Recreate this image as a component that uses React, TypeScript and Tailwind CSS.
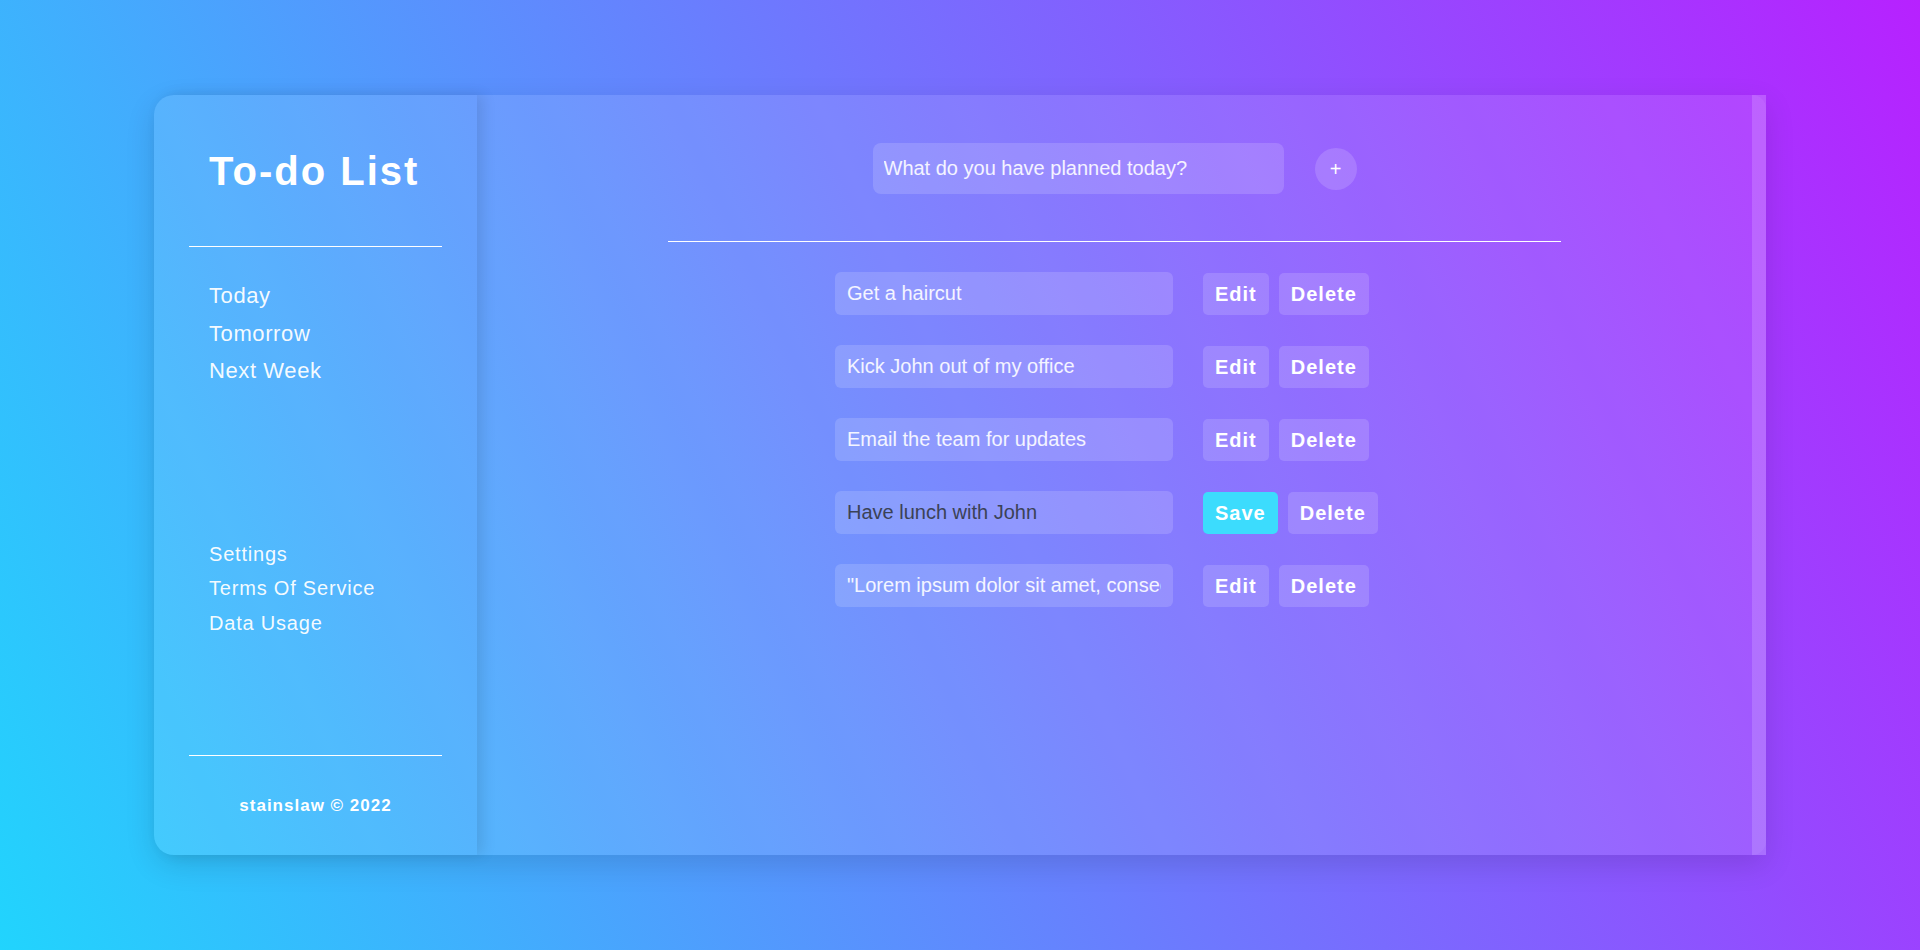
import React, { useState } from 'react'

type Todo = { id: number; text: string }

const initialTodos: Todo[] = [
  { id: 1, text: 'Get a haircut' },
  { id: 2, text: 'Kick John out of my office' },
  { id: 3, text: 'Email the team for updates' },
  { id: 4, text: 'Have lunch with John' },
  { id: 5, text: '"Lorem ipsum dolor sit amet, consectetur adipiscing elit, sed do eiusmod tempor"' },
]

const font = { fontFamily: '"Liberation Sans", Arial, sans-serif' }

export default function App() {
  const [todos, setTodos] = useState<Todo[]>(initialTodos)
  const [editingId, setEditingId] = useState<number | null>(4)
  const [draft, setDraft] = useState('')

  const addTodo = () => {
    if (!draft.trim()) return
    setTodos(prev => [...prev, { id: Date.now(), text: draft.trim() }])
    setDraft('')
  }

  const updateTodo = (id: number, text: string) => {
    setTodos(prev => prev.map(t => (t.id === id ? { ...t, text } : t)))
  }

  const deleteTodo = (id: number) => {
    setTodos(prev => prev.filter(t => t.id !== id))
  }

  return (
    <div
      className="h-[950px] w-full overflow-hidden bg-[linear-gradient(65deg,#21d4fd_0%,#b721ff_100%)] pt-[95px] pl-[154px]"
      style={font}
    >
      <div className="flex h-[760px] w-[1612px] rounded-l-[20px] shadow-[0_10px_30px_rgba(0,0,0,0.12)]">
        <Sidebar />

        <main className="flex flex-1 flex-col bg-white/10 pt-[48px]">
          <div className="flex items-center justify-center">
            <input
              className="h-[51px] w-[411px] rounded-[8px] bg-white/15 px-[11px] text-[20px] text-white outline-none placeholder:text-white/90"
              placeholder="What do you have planned today?"
              value={draft}
              onChange={e => setDraft(e.target.value)}
            />
            <button
              onClick={addTodo}
              className="ml-[31px] flex h-[42px] w-[42px] items-center justify-center rounded-full bg-white/15 text-[20px] text-white"
            >
              +
            </button>
          </div>

          <div className="mx-auto mt-[47px] h-px w-[893px] bg-white" />

          <ul className="mx-auto mt-[30px] flex w-[893px] flex-col gap-[30px] pl-[167px]">
            {todos.map(todo => {
              const editing = editingId === todo.id
              return (
                <li key={todo.id} className="flex items-center">
                  <input
                    readOnly={!editing}
                    value={todo.text}
                    onChange={e => updateTodo(todo.id, e.target.value)}
                    className={`h-[43px] w-[338px] rounded-[6px] bg-white/15 px-[12px] text-[20px] outline-none ${editing ? 'text-[#3b4256]' : 'text-white/90'}`}
                  />
                  {editing ? (
                    <button
                      onClick={() => setEditingId(null)}
                      className="ml-[30px] h-[42px] rounded-[5px] bg-[#3cdcfd] px-[12px] text-[20px] font-bold tracking-[1px] text-white"
                    >
                      Save
                    </button>
                  ) : (
                    <button
                      onClick={() => setEditingId(todo.id)}
                      className="ml-[30px] h-[42px] rounded-[5px] bg-white/15 px-[12px] text-[20px] font-bold tracking-[1px] text-white"
                    >
                      Edit
                    </button>
                  )}
                  <button
                    onClick={() => deleteTodo(todo.id)}
                    className="ml-[10px] h-[42px] rounded-[5px] bg-white/15 px-[12px] text-[20px] font-bold tracking-[1px] text-white"
                  >
                    Delete
                  </button>
                </li>
              )
            })}
          </ul>
        </main>

        {/* scrollbar track */}
        <div className="w-[14px] bg-white/20">
          <div className="h-full rounded-r-[14px] bg-white/5" />
        </div>
      </div>
    </div>
  )
}

function Sidebar() {
  return (
    <aside className="relative z-10 flex w-[323px] flex-col items-center rounded-l-[20px] bg-white/10 pt-[52px] shadow-[6px_0_14px_rgba(0,0,0,0.1)]">
      <h1 className="w-full pl-[55px] text-[40px] leading-[48px] font-bold tracking-[2px] text-white">To-do List</h1>
      <div className="mt-[51px] h-px w-[253px] bg-white" />

      <nav className="mt-[30px] w-full pl-[55px] text-[22px] leading-[37.5px] tracking-[0.6px] text-white/95">
        <div>Today</div>
        <div>Tomorrow</div>
        <div>Next Week</div>
      </nav>

      <nav className="mt-[147px] w-full pl-[55px] text-[20px] leading-[34.5px] tracking-[0.8px] text-white/95">
        <div>Settings</div>
        <div>Terms Of Service</div>
        <div>Data Usage</div>
      </nav>

      <div className="mt-[115px] h-px w-[253px] bg-white" />
      <p className="mt-[38px] text-[17px] leading-[24px] font-bold tracking-[1px] text-white">stainslaw © 2022</p>
    </aside>
  )
}
